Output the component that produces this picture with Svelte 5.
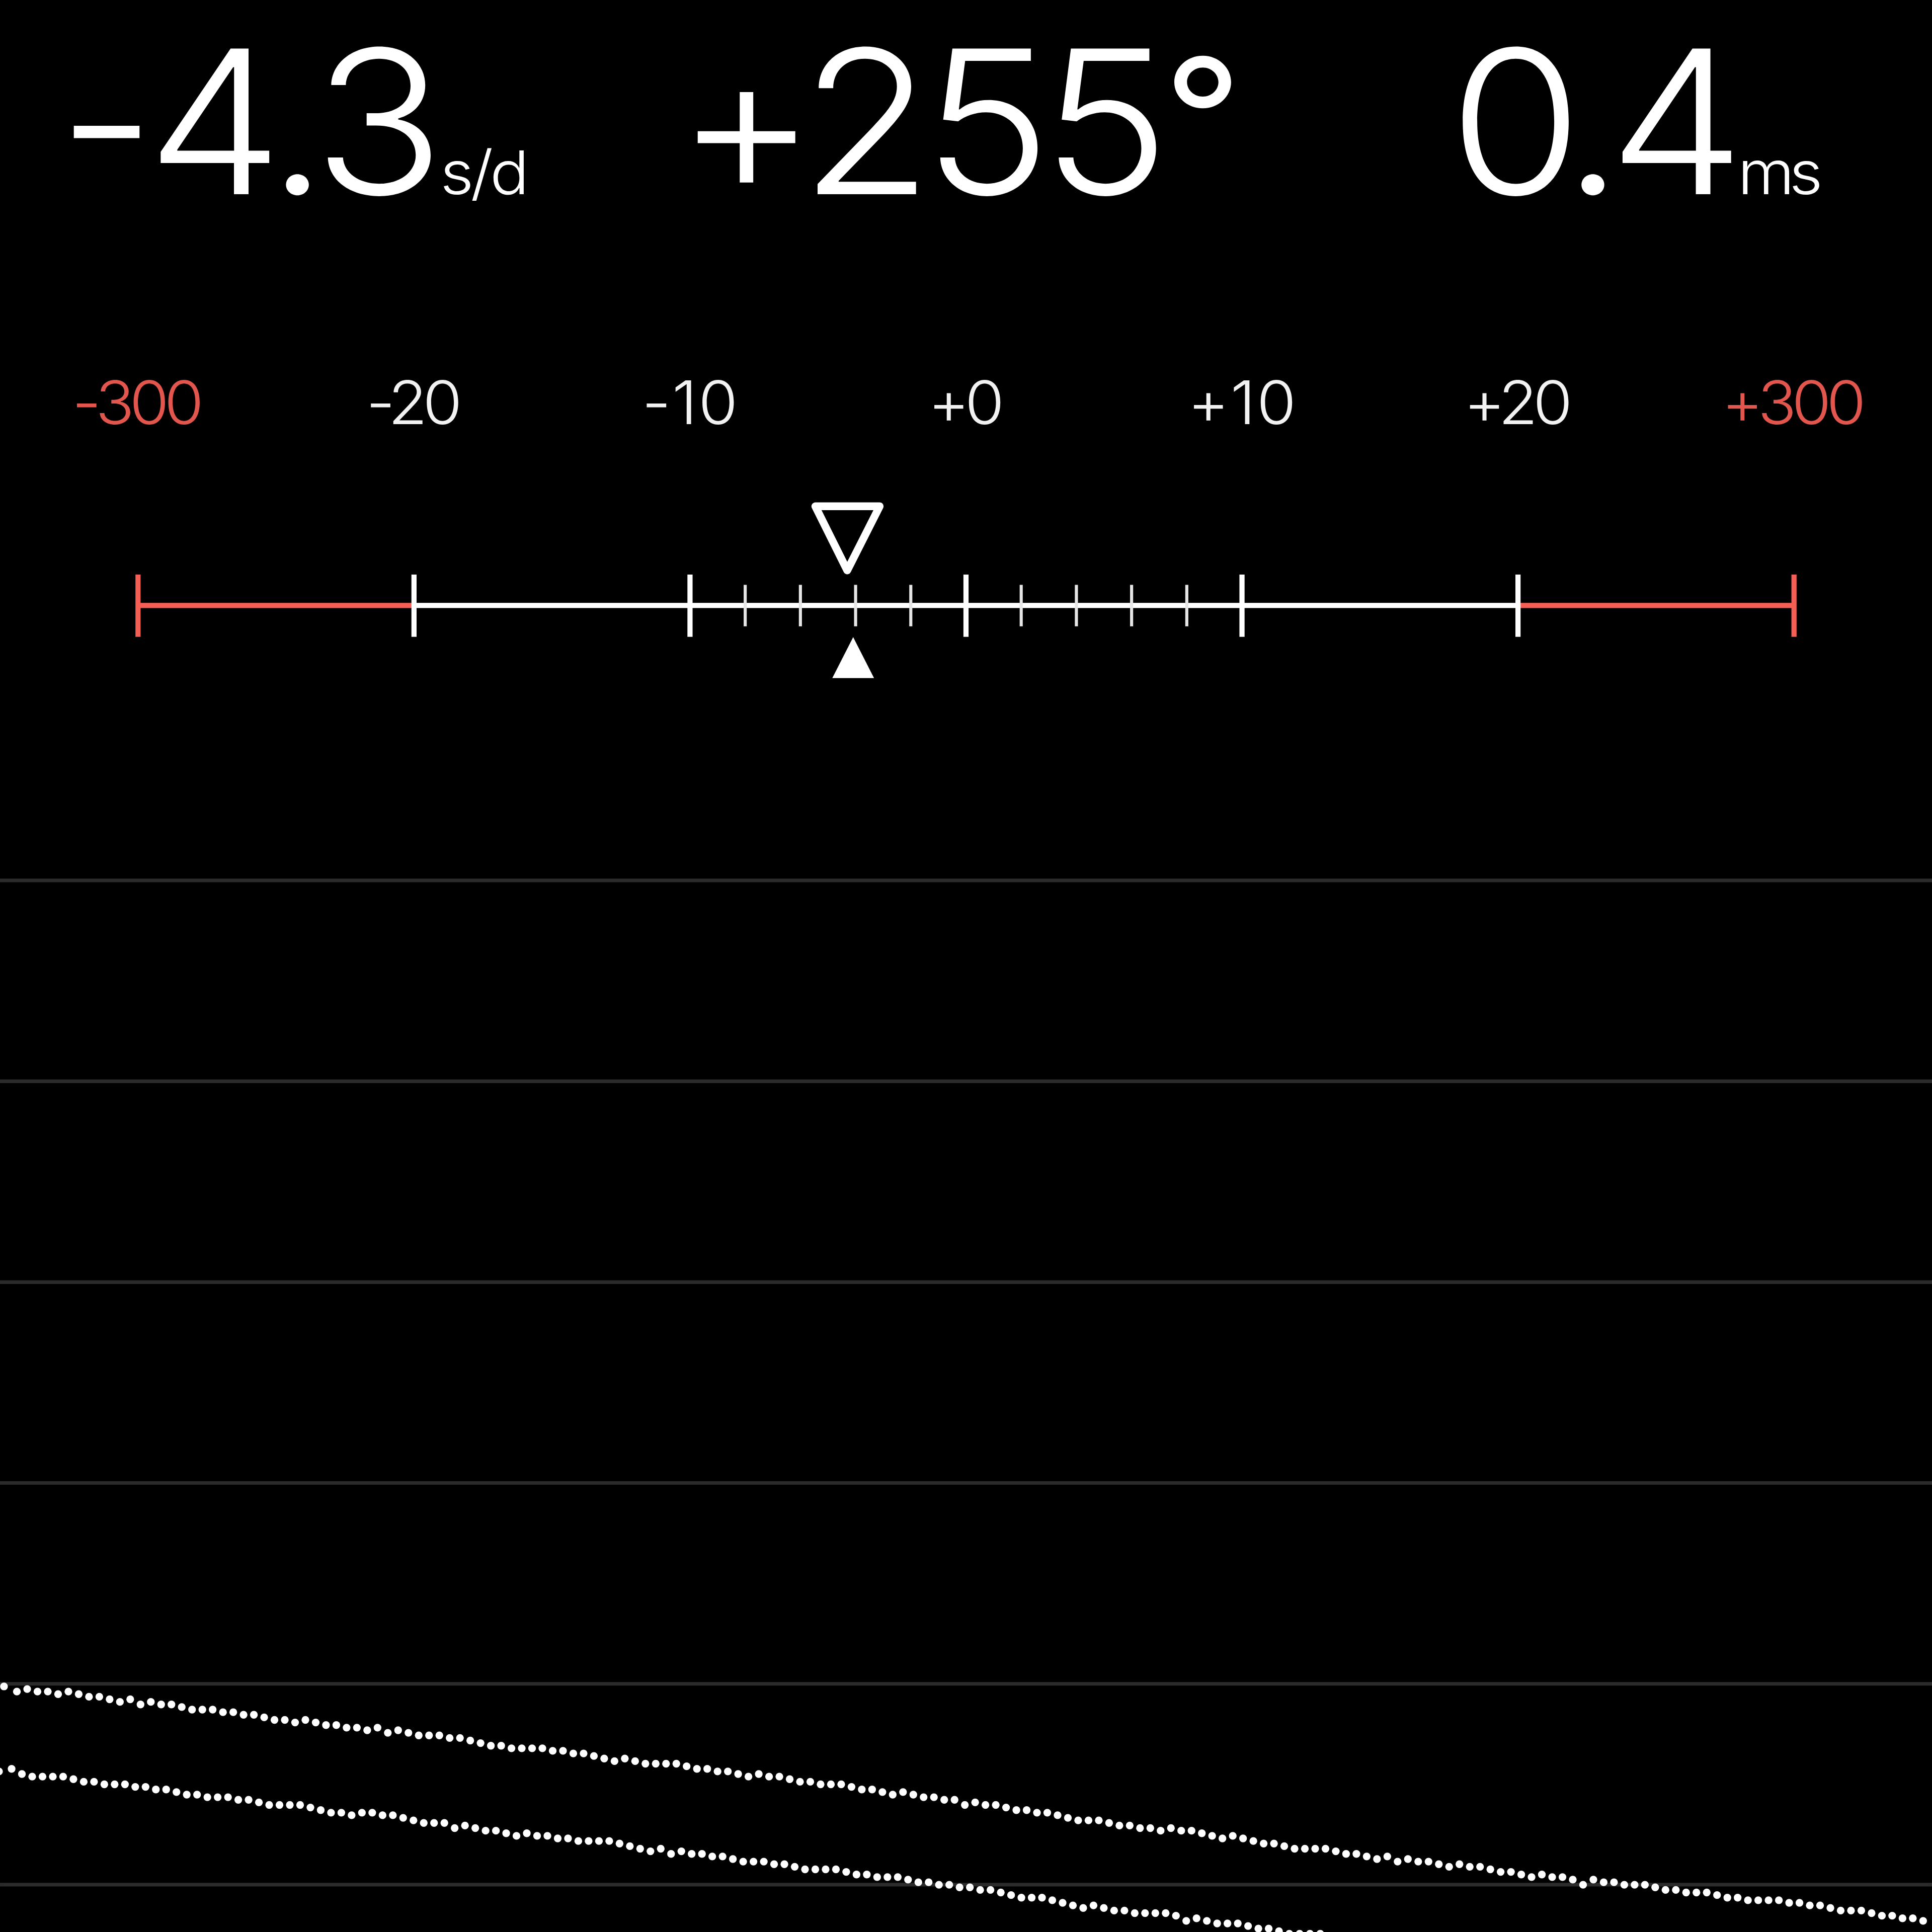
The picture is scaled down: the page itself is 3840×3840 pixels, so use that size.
<script>
  const readouts = [
    { id: 'rate', value: '-4.3', unit: 's/d' },
    { id: 'amplitude', value: '+255', degree: true },
    { id: 'beat', value: '0.4', unit: 'ms' },
  ];

  const labels = [
    { text: '-300', danger: true },
    { text: '-20' },
    { text: '-10', loose: true },
    { text: '+0' },
    { text: '+10', loose: true },
    { text: '+20' },
    { text: '+300', danger: true },
  ];

  // the gauge and the graph share a 750 unit wide canvas
  const column = 750 / 7;
  const center = 375;
  const majors = [-3, -2, -1, 0, 1, 2, 3];
  const minors = [-8, -6, -4, -2, 2, 4, 6, 8];

  const tickX = (rate) => center + (rate * column) / 10;

  const gridLines = [0, 1, 2, 3, 4, 5].map((i) => 341.7 + i * 77.97);

  // vertical offset of each beat, in canvas units
  const tick = [
    0, 2, 1, 2, 2, 3, 2, 3, 4, 4, 5, 6, 5, 7, 6, 7, 7, 8, 9, 9, 9, 10, 10, 11, 11, 12, 13, 13, 14, 13,
    14, 15, 15, 16, 16, 17, 16, 18, 17, 18, 19, 19, 19, 20, 20, 21, 22, 23, 23, 24, 24, 24, 24, 25, 25,
    26, 26, 27, 28, 29, 28, 29, 30, 30, 30, 30, 31, 32, 32, 33, 33, 34, 35, 34, 35, 35, 36, 37, 37, 38,
    38, 38, 39, 40, 40, 41, 42, 41, 42, 43, 43, 44, 44, 46, 45, 46, 46, 47, 48, 48, 49, 49, 50, 51, 52,
    52, 52, 53, 54, 54, 55, 55, 56, 55, 56, 56, 57, 58, 59, 58, 59, 60, 61, 61, 62, 63, 63, 63, 63, 64,
    65, 65, 66, 67, 66, 68, 67, 68, 68, 69, 70, 69, 70, 70, 71, 72, 72, 73, 74, 73, 74, 74, 75, 77, 75,
    76, 76, 77, 77, 77, 78, 79, 79, 80, 80, 80, 81, 82, 82, 83, 83, 83, 83, 84, 84, 85, 85, 86, 87, 87,
    87, 88, 89, 89, 90, 90, 91,
  ];
  const tock = [
    0, -1, 1, 2, 2, 2, 2, 3, 4, 4, 5, 5, 5, 6, 6, 7, 7, 8, 9, 9, 10, 10, 10, 11, 11, 12, 13, 13, 13, 13,
    14, 15, 16, 16, 17, 16, 16, 17, 17, 18, 19, 20, 20, 20, 22, 21, 22, 23, 23, 24, 25, 24, 25, 25, 26,
    26, 27, 27, 27, 27, 28, 29, 30, 31, 30, 32, 31, 32, 32, 33, 33, 34, 35, 35, 35, 36, 36, 37, 38, 38,
    38, 38, 39, 40, 40, 41, 41, 41, 42, 43, 43, 44, 44, 45, 45, 46, 46, 47, 48, 49, 49, 49, 50, 51, 52,
    53, 52, 53, 54, 54, 55, 55, 55, 55, 56, 58, 57, 58, 59, 59, 59, 60, 61, 61, 62, 63, 63, 63, 63,
  ];

  function plot(offsets, firstX, startX, startY) {
    return offsets.map((dy, i) => ({
      x: i === 0 ? firstX : startX + (i - 1) * 4,
      y: startY + dy,
    }));
  }

  const beats = [...plot(tick, 1.55, 6.55, 654.6), ...plot(tock, -0.4, 4.5, 687.6)];
</script>

<main class="timegrapher">
  <header class="readouts">
    {#each readouts as { id, value, unit, degree }}
      <div class="readout {id}">
        <span class="value">{value}</span>{#if degree}<span class="degree">°</span>{/if}{#if unit}<span class="unit">{unit}</span>{/if}
      </div>
    {/each}
  </header>

  <div class="labels">
    {#each labels as { text, danger, loose }}
      <span class="label" class:danger class:loose>{text}</span>
    {/each}
  </div>

  <svg class="gauge" viewBox="0 190 750 90">
    <line class="danger-line" x1={tickX(-30)} x2={tickX(-20)} y1="235" y2="235" />
    <line class="danger-line" x1={tickX(20)} x2={tickX(30)} y1="235" y2="235" />
    <line class="axis" x1={tickX(-20)} x2={tickX(20)} y1="235" y2="235" />
    {#each majors as m}
      <line
        class={Math.abs(m) === 3 ? 'danger-line' : 'axis'}
        x1={tickX(m * 10)}
        x2={tickX(m * 10)}
        y1="223"
        y2="247.2"
      />
    {/each}
    {#each minors as m}
      <line class="minor" x1={tickX(m)} x2={tickX(m)} y1="227" y2="243.1" />
    {/each}
    <path class="pointer" d="M316.5 196.5h25l-12.6 24.9z" />
    <path class="average" d="M331.2 247.3l8.1 15.9h-16.2z" />
  </svg>

  <svg class="graph" viewBox="0 280 750 470">
    {#each gridLines as y}
      <line class="grid-line" x1="0" x2="750" y1={y} y2={y} />
    {/each}
    {#each beats as { x, y }}
      <circle cx={x} cy={y} r="1.5" />
    {/each}
  </svg>
</main>

<style>
  :global(body) {
    margin: 0;
    background: #000000;
  }

  .timegrapher {
    display: flex;
    flex-direction: column;
    width: 3840px;
    height: 3840px;
    background: #000000;
    color: #ffffff;
    font-family: Inter, 'Liberation Sans', sans-serif;
    font-feature-settings: 'calt' 0;
  }

  .readouts {
    display: grid;
    grid-template-columns: 1160px 1492px 1188px;
    height: 720px;
  }

  .readout {
    display: flex;
    justify-content: center;
    align-items: baseline;
    height: 482px;
    line-height: 482px;
    white-space: nowrap;
    transform: scaleX(1.08);
  }

  .value {
    font-size: 398px;
    font-weight: 300;
  }

  .rate .value {
    letter-spacing: -16px;
  }

  .amplitude .value {
    letter-spacing: -18px;
  }

  .beat .value {
    letter-spacing: -27px;
  }

  .degree {
    align-self: flex-start;
    margin-top: -12px;
    margin-left: 6px;
    font-size: 318px;
    font-weight: 400;
  }

  .unit {
    margin-left: 8px;
    font-size: 120px;
    font-weight: 300;
    letter-spacing: -6px;
  }

  .beat .unit {
    margin-left: 14px;
    letter-spacing: -10px;
  }

  .labels {
    display: grid;
    grid-template-columns: repeat(7, 1fr);
    height: 253px;
  }

  .label {
    color: #f2f2f2;
    font-size: 120px;
    font-weight: 300;
    letter-spacing: -9px;
    text-indent: -9px;
    line-height: 159px;
    text-align: center;
    transform: scaleX(1.06);
  }

  .label.loose {
    letter-spacing: 2px;
    text-indent: 2px;
  }

  .label.danger {
    color: #e2564d;
  }

  .gauge,
  .graph {
    display: block;
    flex: none;
    width: 3840px;
  }

  .axis {
    stroke: #ffffff;
    stroke-width: 2;
  }

  .danger-line {
    stroke: #f55e54;
    stroke-width: 2;
  }

  .minor {
    stroke: #e6e6e6;
    stroke-width: 1.2;
  }

  .pointer {
    fill: none;
    stroke: #ffffff;
    stroke-width: 3;
    stroke-linejoin: round;
  }

  .average,
  circle {
    fill: #ffffff;
  }

  .grid-line {
    stroke: #2b2b2b;
    stroke-width: 1.4;
  }
</style>
